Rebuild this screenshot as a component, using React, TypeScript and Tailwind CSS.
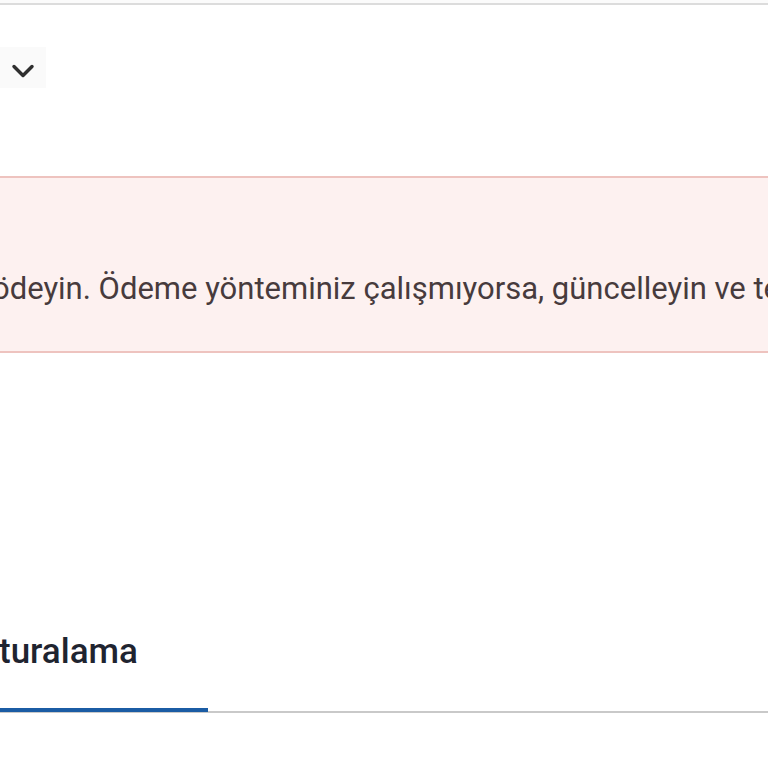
import { ChevronDown } from "lucide-react";

const font = { fontFamily: "Roboto, 'Noto Sans', Arial, sans-serif" };

export const BillingHeader = () => {
  return (
    <div className="flex flex-col">
      <div className="h-[3px] bg-[#fbfbfb]" />
      <div className="h-[2px] bg-[#dcdcdc]" />
      <div className="mt-[42px] flex">
        <div className="w-[46px] h-[41px] bg-[#fafafa] flex items-center justify-end pr-[5px] pt-[7px]">
          <ChevronDown className="text-[#2f2f2f]" size={36} strokeWidth={2.3} />
        </div>
      </div>
    </div>
  );
};

export const PaymentAlert = () => {
  return (
    <div className="mt-[88px] h-[177px] bg-[#fdf1f0] border-y-2 border-[#eec3bf] overflow-hidden">
      <div className="pt-[93px] -ml-[8px] whitespace-nowrap text-[31px] leading-[36px] text-[#473b3d]">
        ödeyin. Ödeme yönteminiz çalışmıyorsa, güncelleyin ve tekrar deneyin.
      </div>
    </div>
  );
};

export const TabBar = () => {
  return (
    <div className="mt-[279px] flex border-b-2 border-[#c9c9c9]">
      <div className="w-[208px] -mb-[1px] border-b-4 border-[#1b5ca4] pb-[36px]">
        <span className="-ml-[1px] block text-[35px] leading-[40px] font-medium text-[#1f2430]">
          turalama
        </span>
      </div>
    </div>
  );
};

export default function App() {
  return (
    <div className="w-[768px] h-[768px] bg-white overflow-hidden" style={font}>
      <BillingHeader />
      <PaymentAlert />
      <TabBar />
    </div>
  );
}
